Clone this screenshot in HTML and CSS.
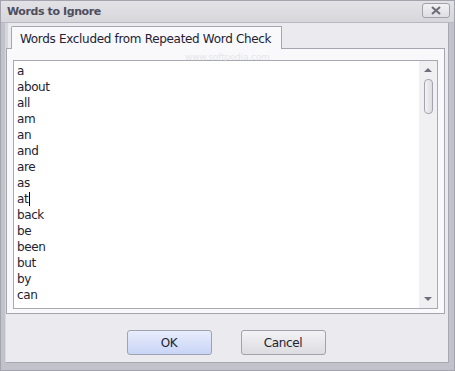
FILE: index.html
```html
<!DOCTYPE html>
<html lang="en">
<head>
    <meta charset="UTF-8">
    <title>Words to Ignore</title>
    <link rel="stylesheet" href="styles.css">
</head>
<body>
    <div class="window">
        <div class="titlebar">
            <span class="title">Words to Ignore</span>
            <button class="close-btn" title="Close">
                <svg width="12" height="9" viewBox="0 0 12 9"><path d="M2 1 L10 8 M10 1 L2 8" stroke="#6e6e7a" stroke-width="2.2" fill="none"/></svg>
            </button>
        </div>
        <div class="client">
            <div class="tabs">
                <div class="tab active">Words Excluded from Repeated Word Check</div>
            </div>
            <div class="panel">
                <span class="watermark">www.softpedia.com</span>
                <div class="memo">
                    <div class="lines">
                        <div>a</div>
                        <div>about</div>
                        <div>all</div>
                        <div>am</div>
                        <div>an</div>
                        <div>and</div>
                        <div>are</div>
                        <div>as</div>
                        <div>at<span class="caret"></span></div>
                        <div>back</div>
                        <div>be</div>
                        <div>been</div>
                        <div>but</div>
                        <div>by</div>
                        <div>can</div>
                    </div>
                    <div class="scrollbar">
                        <span class="arrow up"></span>
                        <div class="track">
                            <div class="thumb"></div>
                        </div>
                        <span class="arrow down"></span>
                    </div>
                </div>
            </div>
            <div class="buttons">
                <button class="btn default">OK</button>
                <button class="btn">Cancel</button>
            </div>
        </div>
    </div>
</body>
</html>
```

FILE: styles.css
```css
body {
    margin: 0;
    font-family: "DejaVu Sans", "Liberation Sans", sans-serif;
    font-size: 12px;
    color: #222233;
}

.window {
    width: 455px;
    height: 371px;
    box-sizing: border-box;
    display: flex;
    flex-direction: column;
    background: #c2c2ca;
    border: 1px solid #a4a4ae;
}

.titlebar {
    height: 21px;
    display: flex;
    align-items: center;
    justify-content: space-between;
    padding: 0 4px 0 6px;
    background: linear-gradient(#e2e2e6, #d6d6dc);
    border-bottom: 1px solid #b8b8c0;
}

.title {
    font-weight: bold;
    font-size: 11px;
    letter-spacing: -0.4px;
    color: #4e4e5e;
}

.close-btn {
    width: 28px;
    height: 15px;
    margin-top: -2px;
    padding: 0;
    display: flex;
    align-items: center;
    justify-content: center;
    border: 1px solid #a2a2ac;
    border-radius: 3px;
    background: linear-gradient(#f2f2f4, #dedee3);
}

.client {
    flex: 1;
    display: flex;
    flex-direction: column;
    margin: 0 5px 7px 4px;
    background: #ebebef;
    border-left: 1px solid #d8d8de;
    border-right: 1px solid #a8a8b2;
    border-bottom: 1px solid #a8a8b2;
}

.tabs {
    height: 25px;
    display: flex;
    align-items: flex-end;
    padding-left: 3px;
    border-left: 3px solid #d6d6dc;
    margin-left: -1px;
}

.tab {
    height: 23px;
    box-sizing: border-box;
    padding: 5px 10px 0 8px;
    background: #f9f9fb;
    border: 1px solid #a6a6b0;
    border-bottom: none;
    border-top-left-radius: 2px;
    margin-bottom: -1px;
    position: relative;
    z-index: 1;
    letter-spacing: -0.32px;
    white-space: nowrap;
}

.panel {
    height: 266px;
    box-sizing: border-box;
    margin-right: 3px;
    padding: 11px 6px 4px 6px;
    background: #f9f9fb;
    border: 1px solid #a6a6b0;
    display: flex;
    position: relative;
}

.watermark {
    position: absolute;
    left: 178px;
    top: 3px;
    font-size: 9px;
    color: #e6e6ea;
    letter-spacing: -0.2px;
}

.memo {
    flex: 1;
    display: flex;
    background: #fff;
    border: 1px solid #a9a9b2;
}

.lines {
    flex: 1;
    padding: 2px 0 0 3px;
    line-height: 16px;
    letter-spacing: -0.4px;
    overflow: hidden;
}

.caret {
    display: inline-block;
    width: 0;
    height: 14px;
    border-left: 1px solid #000;
    vertical-align: -3px;
    margin-left: 1px;
}

.scrollbar {
    width: 18px;
    display: flex;
    flex-direction: column;
    align-items: center;
    background: #f0f0f3;
}

.track {
    flex: 1;
    width: 100%;
    display: flex;
    justify-content: center;
    padding-top: 7px;
}

.thumb {
    width: 7px;
    height: 33px;
    border: 1px solid #a4a4ae;
    border-radius: 4px;
    background: linear-gradient(90deg, #f4f4f6, #dcdce2);
}

.arrow {
    width: 0;
    height: 0;
    border-left: 4px solid transparent;
    border-right: 4px solid transparent;
}

.arrow.up {
    margin-top: 7px;
    border-bottom: 4px solid #6e6e7c;
}

.arrow.down {
    margin-bottom: 7px;
    border-top: 4px solid #6e6e7c;
}

.buttons {
    flex: 1;
    display: flex;
    justify-content: center;
    align-items: flex-start;
    gap: 29px;
    padding-top: 16px;
    padding-right: 2px;
}

.btn {
    width: 85px;
    height: 25px;
    font-family: "DejaVu Sans", "Liberation Sans", sans-serif;
    font-size: 12px;
    letter-spacing: -0.4px;
    color: #222233;
    border: 1px solid #a2a2ae;
    border-radius: 3px;
    background: linear-gradient(#f3f3f5, #dcdce1);
}

.btn.default {
    background: linear-gradient(#e8edfc, #c9d5f7);
}
```
